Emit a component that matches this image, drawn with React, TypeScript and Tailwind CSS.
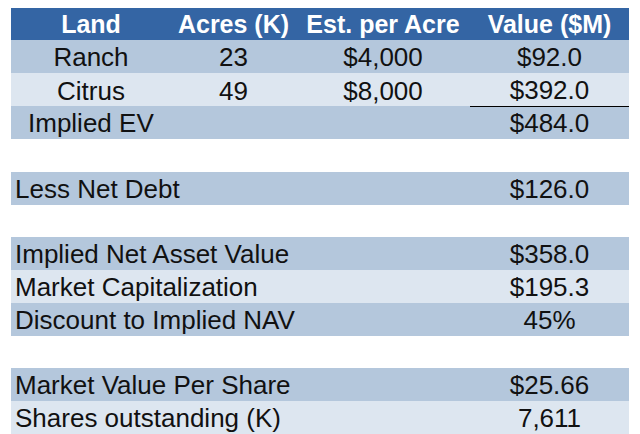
import React from "react";

type Row = {
  label: string;
  acres?: string;
  perAcre?: string;
  value?: string;
  tone: "dark" | "light" | "blank";
  centered?: boolean;
  underline?: boolean;
  indent?: boolean;
  h?: string;
};

const rows: Row[] = [
  { label: "Ranch", acres: "23", perAcre: "$4,000", value: "$92.0", tone: "dark", centered: true },
  { label: "Citrus", acres: "49", perAcre: "$8,000", value: "$392.0", tone: "light", centered: true, underline: true },
  { label: "Implied EV", value: "$484.0", tone: "dark", indent: true },
  { label: "", tone: "blank" },
  { label: "Less Net Debt", value: "$126.0", tone: "dark" },
  { label: "", tone: "blank", h: "h-[32px]" },
  { label: "Implied Net Asset Value", value: "$358.0", tone: "dark" },
  { label: "Market Capitalization", value: "$195.3", tone: "light" },
  { label: "Discount to Implied NAV", value: "45%", tone: "dark" },
  { label: "", tone: "blank", h: "h-[32px]" },
  { label: "Market Value Per Share", value: "$25.66", tone: "dark" },
  { label: "Shares outstanding (K)", value: "7,611", tone: "light" },
];

const toneClass = {
  dark: "bg-[#b4c7dc]",
  light: "bg-[#dde6f0]",
  blank: "bg-white",
};

export default function App() {
  return (
    <div className="h-[434px] w-[640px] overflow-hidden bg-white pl-[11px] pt-[8px] font-['Liberation_Sans',Arial,sans-serif] text-[#111]">
      <div className="w-[618px]">
        <div className="grid h-[32px] grid-cols-[160px_125px_174px_159px] items-center bg-[#3465a4] text-[25px] font-bold leading-[32px] text-white">
          <div className="text-center">Land</div>
          <div className="text-center">Acres (K)</div>
          <div className="text-center">Est. per Acre</div>
          <div className="text-center">Value ($M)</div>
        </div>
        {rows.map((r, i) => (
          <div
            key={i}
            className={`grid ${r.h ?? "h-[33px]"} grid-cols-[160px_125px_174px_159px] items-center pt-[1px] text-[26px] leading-[32px] ${toneClass[r.tone]}`}
          >
            {r.centered ? (
              <>
                <div className="text-center">{r.label}</div>
                <div className="text-center">{r.acres}</div>
                <div className="text-center">{r.perAcre}</div>
              </>
            ) : (
              <div className={`col-span-3 whitespace-nowrap ${r.indent ? "pl-[17px]" : "pl-[4px]"}`}>
                {r.label}
              </div>
            )}
            <div className={`h-full text-center ${r.underline ? "border-b border-black" : ""}`}>
              {r.value}
            </div>
          </div>
        ))}
      </div>
    </div>
  );
}
